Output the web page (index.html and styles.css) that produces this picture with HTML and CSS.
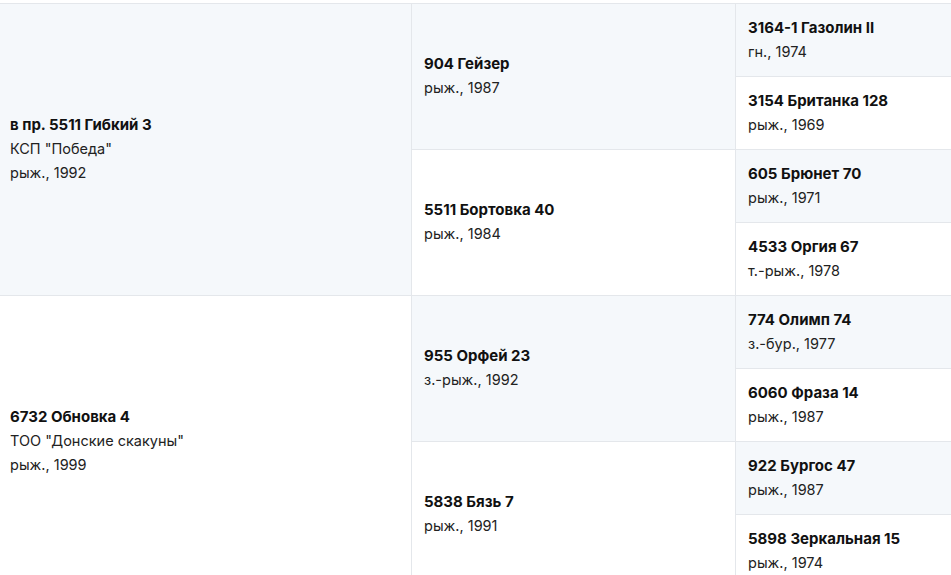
FILE: index.html
```html
<!DOCTYPE html>
<html lang="ru">
<head>
<meta charset="utf-8">
<title>Родословная</title>
<link rel="stylesheet" href="styles.css">
</head>
<body>
<div class="pedigree">
  <div class="cell c1 r1 shade">
    <div class="name">в пр. 5511 Гибкий 3</div>
    <div class="info">КСП "Победа"</div>
    <div class="info">рыж., 1992</div>
  </div>
  <div class="cell c1 r5">
    <div class="name">6732 Обновка 4</div>
    <div class="info">ТОО "Донские скакуны"</div>
    <div class="info">рыж., 1999</div>
  </div>

  <div class="cell c2 r1 shade">
    <div class="name">904 Гейзер</div>
    <div class="info">рыж., 1987</div>
  </div>
  <div class="cell c2 r3">
    <div class="name">5511 Бортовка 40</div>
    <div class="info">рыж., 1984</div>
  </div>
  <div class="cell c2 r5 shade">
    <div class="name">955 Орфей 23</div>
    <div class="info">з.-рыж., 1992</div>
  </div>
  <div class="cell c2 r7">
    <div class="name">5838 Бязь 7</div>
    <div class="info">рыж., 1991</div>
  </div>

  <div class="cell c3 shade">
    <div class="name">3164-1 Газолин II</div>
    <div class="info">гн., 1974</div>
  </div>
  <div class="cell c3">
    <div class="name">3154 Британка 128</div>
    <div class="info">рыж., 1969</div>
  </div>
  <div class="cell c3 shade">
    <div class="name">605 Брюнет 70</div>
    <div class="info">рыж., 1971</div>
  </div>
  <div class="cell c3">
    <div class="name">4533 Оргия 67</div>
    <div class="info">т.-рыж., 1978</div>
  </div>
  <div class="cell c3 shade">
    <div class="name">774 Олимп 74</div>
    <div class="info">з.-бур., 1977</div>
  </div>
  <div class="cell c3">
    <div class="name">6060 Фраза 14</div>
    <div class="info">рыж., 1987</div>
  </div>
  <div class="cell c3 shade">
    <div class="name">922 Бургос 47</div>
    <div class="info">рыж., 1987</div>
  </div>
  <div class="cell c3">
    <div class="name">5898 Зеркальная 15</div>
    <div class="info">рыж., 1974</div>
  </div>
</div>
</body>
</html>
```

FILE: styles.css
```css
html, body {
  margin: 0;
  padding: 0;
  background: #ffffff;
}

body {
  font-family: "Inter", "Noto Sans", "Liberation Sans", sans-serif;
  font-size: 14.5px;
  line-height: 24px;
  color: #1b1b1b;
  overflow: hidden;
}

.pedigree {
  margin-top: 3px;
  border-top: 1px solid #e4e7eb;
  display: grid;
  grid-template-columns: 412px 324px 260px;
  grid-template-rows: repeat(8, 73px);
  width: 996px;
}

.cell {
  box-sizing: border-box;
  border-right: 1px solid #e4e7eb;
  border-bottom: 1px solid #e4e7eb;
  padding: 0 12px;
  display: flex;
  flex-direction: column;
  justify-content: center;
  background: #ffffff;
}

.shade {
  background: #f5f8fb;
}

.c1 {
  grid-column: 1;
  padding-left: 10px;
  padding-bottom: 2px;
}

.c2 {
  grid-column: 2;
  padding-bottom: 1px;
}

.c3 {
  grid-column: 3;
}

.c1.r1 { grid-row: 1 / span 4; }
.c1.r5 { grid-row: 5 / span 4; }
.c2.r1 { grid-row: 1 / span 2; }
.c2.r3 { grid-row: 3 / span 2; }
.c2.r5 { grid-row: 5 / span 2; }
.c2.r7 { grid-row: 7 / span 2; }

.name {
  font-size: 15px;
  font-weight: 700;
  color: #111111;
}

.info {
  font-weight: 400;
  color: #222222;
}
```
